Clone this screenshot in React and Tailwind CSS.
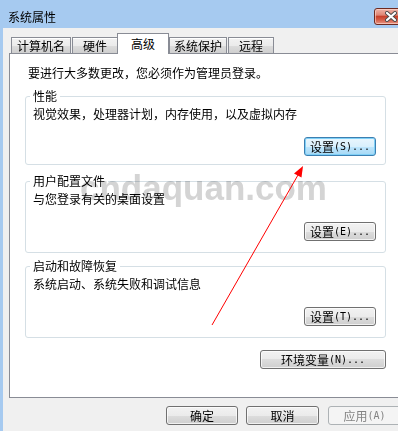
import React from "react";

const BTN = {
  normal:
    "border-[#707070] bg-[linear-gradient(#f2f2f2_0%,#ebebeb_50%,#dddddd_50%,#cfcfcf_100%)] text-black shadow-[inset_0_0_0_1px_rgba(255,255,255,0.7)]",
  focus:
    "border-[#3c7fb1] bg-[linear-gradient(#eaf6fd_0%,#d9f0fc_50%,#bee6fd_50%,#a7d9f5_100%)] text-black shadow-[inset_0_0_0_1px_#7fd0f7]",
  disabled: "border-[#adb2b5] bg-[#f4f4f4] text-[#838383]",
};

function Btn({ zh, en, variant = "normal", className = "" }) {
  return (
    <div
      className={`h-[19px] rounded-[3px] border flex items-center justify-center text-[12px] leading-[14px] ${BTN[variant]} ${className}`}
    >
      <span>{zh}</span>
      {en ? (
        <span className="font-['DejaVu_Sans_Mono',monospace] text-[10px] leading-[14px]">{en}</span>
      ) : null}
    </div>
  );
}

function Tab({ label, w, selected }) {
  if (selected) {
    return (
      <div
        className={`${w} -ml-[1px] h-[21px] -mb-[1px] relative z-10 border border-b-0 border-[#898c95] bg-white flex items-start justify-center pt-[3px] text-[12px] leading-[14px]`}
      >
        {label}
      </div>
    );
  }
  return (
    <div
      className={`${w} h-[16px] border border-b-0 border-[#898c95] bg-[linear-gradient(#f2f2f2_0%,#ebebeb_50%,#dddddd_50%,#cfcfcf_100%)] shadow-[inset_0_1px_0_#ffffff] flex items-center justify-center text-[12px] leading-[14px]`}
    >
      {label}
    </div>
  );
}

function Group({ title, text, btn, className }) {
  return (
    <fieldset className={`border border-[#d5dfe5] rounded-[3px] ${className}`}>
      <legend className="ml-[4px] px-[3px] text-[12px] leading-[14px]">{title}</legend>
      <div className="pl-[7px] pt-[4px] text-[12px] leading-[14px]">{text}</div>
      <div className="mt-[16px] flex justify-end pr-[9px]">{btn}</div>
    </fieldset>
  );
}

export default function App() {
  return (
    <div className="relative w-[398px] h-[431px] overflow-hidden bg-[#a6caf0] text-black font-['Noto_Sans_CJK_SC','Liberation_Sans',sans-serif]">
      {/* title bar */}
      <div className="h-[28px] flex">
        <div className="pl-[8px] pt-[10px] text-[12px] leading-[14px]">系统属性</div>
        <div className="ml-auto -mr-[19px] mt-[8px] w-[43px] h-[17px] rounded-[3px] border border-[#6e2a20] bg-[linear-gradient(#eeb2a6_0%,#df8674_40%,#c7412b_50%,#d35a44_70%,#e79482_100%)] shadow-[inset_0_0_0_1px_rgba(255,220,210,0.6)]">
          <svg width="12" height="11" viewBox="0 0 12 11" className="ml-[10px] mt-[2px]">
            <path d="M2 2 L10 9 M10 2 L2 9" stroke="#4a4a4a" strokeWidth="4" strokeLinecap="round" fill="none" />
            <path d="M2 2 L10 9 M10 2 L2 9" stroke="#ffffff" strokeWidth="2.2" strokeLinecap="round" fill="none" />
          </svg>
        </div>
      </div>

      {/* window body */}
      <div className="flex h-[403px]">
        <div className="w-[3px] shrink-0 bg-[#a6caf0]" />
        <div className="flex-1 min-w-[420px] bg-[#f0f0f0] flex flex-col">
          {/* tabs */}
          <div className="h-[25px] pl-[8px] flex items-end">
            <Tab label="计算机名" w="w-[60px]" />
            <div className="w-[1px]" />
            <Tab label="硬件" w="w-[46px]" />
            <Tab label="高级" w="w-[52px]" selected />
            <Tab label="系统保护" w="w-[58px]" />
            <div className="w-[1px]" />
            <Tab label="远程" w="w-[46px]" />
          </div>

          {/* panel */}
          <div className="ml-[6px] w-[392px] h-[345px] border border-[#898c95] bg-white">
            <div className="ml-[15px] w-[361px] flex flex-col">
              <div className="pl-[3px] pt-[12px] text-[12px] leading-[14px]">
                要进行大多数更改，您必须作为管理员登录。
              </div>
              <Group
                className="mt-[9px] h-[76px]"
                title="性能"
                text="视觉效果，处理器计划，内存使用，以及虚拟内存"
                btn={<Btn zh="设置" en="(S)..." variant="focus" className="w-[72px]" />}
              />
              <Group
                className="mt-[9px] h-[79px]"
                title="用户配置文件"
                text="与您登录有关的桌面设置"
                btn={<Btn zh="设置" en="(E)..." className="w-[72px]" />}
              />
              <Group
                className="mt-[6px] h-[79px]"
                title="启动和故障恢复"
                text="系统启动、系统失败和调试信息"
                btn={<Btn zh="设置" en="(T)..." className="w-[72px]" />}
              />
              <div className="mt-[12px] flex justify-end">
                <Btn zh="环境变量" en="(N)..." className="w-[126px]" />
              </div>
            </div>
          </div>

          {/* bottom buttons */}
          <div className="mt-[8px] flex">
            <Btn zh="确定" className="ml-[163px] w-[72px]" />
            <Btn zh="取消" className="ml-[8px] w-[73px]" />
            <Btn zh="应用" en="(A)" variant="disabled" className="ml-[9px] w-[73px]" />
          </div>
        </div>
      </div>

      {/* watermark */}
      <div className="absolute left-[80px] top-[170px] pointer-events-none mix-blend-multiply font-['Liberation_Sans',sans-serif] font-bold text-[35px] leading-none text-[#d4d4d4]">
        cndaquan.com
      </div>

      {/* red arrow annotation */}
      <svg className="absolute left-0 top-0 pointer-events-none" width="398" height="431" viewBox="0 0 398 431">
        <line x1="212" y1="325" x2="298" y2="175" stroke="#ff0000" strokeWidth="1" />
        <polygon points="303,166 301.5,177.6 294,173.6" fill="#ff0000" />
      </svg>
    </div>
  );
}
